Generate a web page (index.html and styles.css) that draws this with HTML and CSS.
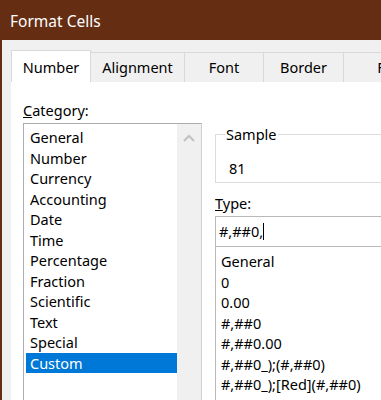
FILE: index.html
```html
<!DOCTYPE html>
<html>
<head>
    <title>Format Cells</title>
    <link rel="stylesheet" href="styles.css">
</head>
<body>
    <div class="titlebar">Format Cells</div>
    <div class="window">
        <div class="tabs">
            <div class="tab active" style="width: 80px">Number</div>
            <div class="tab" style="width: 94px">Alignment</div>
            <div class="tab" style="width: 79px">Font</div>
            <div class="tab" style="width: 80px">Border</div>
            <div class="tab" style="width: 86px">Fill</div>
        </div>
        <div class="panel">
            <div class="left-col">
                <div class="label"><u>C</u>ategory:</div>
                <div class="listbox">
                    <ul class="items">
                        <li>General</li>
                        <li>Number</li>
                        <li>Currency</li>
                        <li>Accounting</li>
                        <li>Date</li>
                        <li>Time</li>
                        <li>Percentage</li>
                        <li>Fraction</li>
                        <li>Scientific</li>
                        <li>Text</li>
                        <li>Special</li>
                        <li class="selected">Custom</li>
                    </ul>
                    <div class="scrollbar">
                        <svg width="12" height="8" viewBox="0 0 12 8">
                            <path d="M1 7 L6 2 L11 7" fill="none" stroke="#c2c2c2" stroke-width="2"/>
                        </svg>
                    </div>
                </div>
            </div>
            <div class="right-col">
                <fieldset class="sample">
                    <legend>Sample</legend>
                    <div class="sample-value">81</div>
                </fieldset>
                <div class="label type-label"><u>T</u>ype:</div>
                <div class="type-input">#,##0,<span class="caret"></span></div>
                <ul class="formats">
                    <li>General</li>
                    <li>0</li>
                    <li>0.00</li>
                    <li>#,##0</li>
                    <li>#,##0.00</li>
                    <li>#,##0_);(#,##0)</li>
                    <li>#,##0_);[Red](#,##0)</li>
                    <li>#,##0.00_);(#,##0.00)</li>
                </ul>
            </div>
        </div>
    </div>
</body>
</html>
```

FILE: styles.css
```css
body { margin: 0; width: 381px; height: 400px; overflow: hidden; font-family: "Noto Sans", sans-serif; font-size: 14px; color: #000; background: #f0f0f0; }
ul { list-style: none; margin: 0; padding: 0; }

.titlebar { height: 40px; box-sizing: border-box; padding: 11px 0 0 10px; background: #652e13; color: #fff; font-size: 15.5px; line-height: 20px; }

.window { border-left: 2px solid #652e13; height: 360px; box-sizing: border-box; padding-left: 9px; overflow: hidden; }

.tabs { display: flex; padding-top: 12px; height: 30px; }
.tab { box-sizing: border-box; height: 30px; border: 1px solid #d9d9d9; border-left: none; border-bottom: none; background: #f0f0f0; text-align: center; line-height: 29px; font-size: 14.5px; flex-shrink: 0; }
.tab.active { background: #fff; border-left: 1px solid #d9d9d9; height: 32px; margin-top: -2px; line-height: 33px; position: relative; }

.panel { background: #fff; height: 400px; display: flex; padding-left: 12px; gap: 13px; }

.left-col { width: 179px; flex-shrink: 0; }
.label { font-size: 14.5px; line-height: 20px; padding-top: 18px; height: 41px; box-sizing: border-box; }
.listbox { border: 1px solid #abadb3; border-right-color: #d0d0d0; display: flex; height: 300px; }
.items { flex: 1; padding: 3px 0 0 2px; }
.items li { height: 20.5px; line-height: 20px; padding-left: 4px; font-size: 14.5px; }
.items li.selected { background: #0078d7; color: #fff; }
.scrollbar { width: 24px; background: #f0f0f0; display: flex; justify-content: center; padding-top: 10px; box-sizing: border-box; }

.right-col { flex: 1; padding-top: 45px; min-width: 200px; }
.sample { margin: 0; padding: 0 0 0 13px; border: 1px solid #dcdcdc; height: 56px; box-sizing: border-box; }
.sample legend { padding: 0 1px; margin-left: -4px; font-size: 14.5px; line-height: 14px; }
.sample-value { font-size: 14.5px; line-height: 20px; padding-top: 17px; }

.type-label { padding-top: 10px; height: 33px; }
.type-input { border: 1px solid #b9b9b9; border-right: none; height: 31px; box-sizing: border-box; padding-left: 3px; line-height: 29px; font-size: 14.5px; }
.caret { display: inline-block; width: 1px; height: 17px; background: #000; vertical-align: -3px; }
.formats { border: 1px solid #b9b9b9; border-top: none; border-right: none; padding: 4px 0 0 5px; height: 200px; }
.formats li { height: 20.5px; line-height: 20px; font-size: 14.5px; }
```
